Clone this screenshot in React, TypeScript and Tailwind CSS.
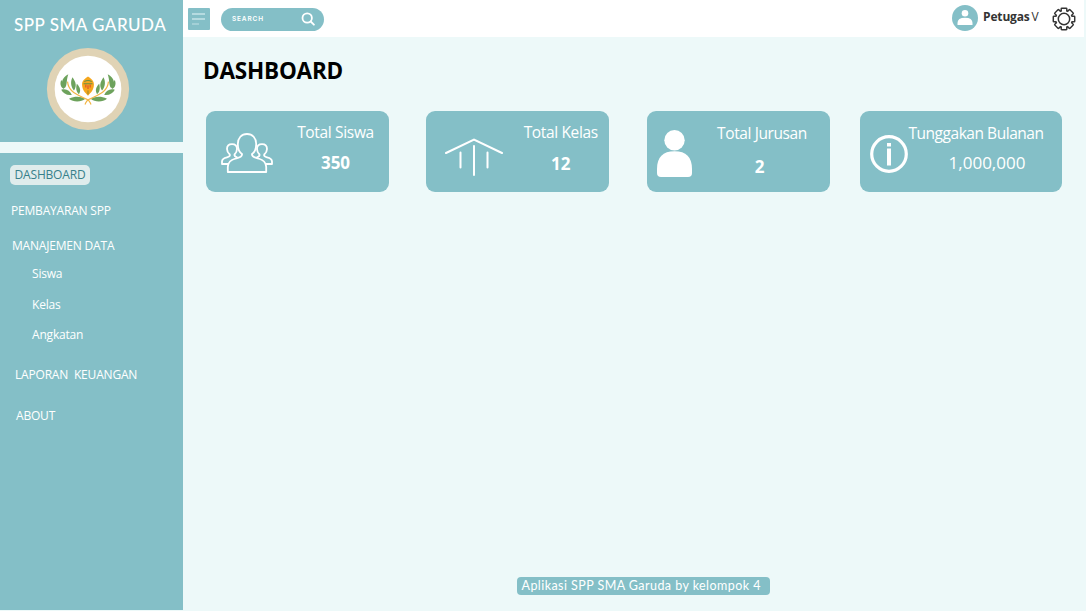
import type { ReactNode } from "react";

function Emblem() {
  const leaves = [
    "M23 55C17 49 18 41 28 36C25 44 27 50 23 55Z",
    "M36 58C31 52 31 45 34 40C39 47 40 52 36 58Z",
    "M43 63C38 59 39 53 40 49C45 54 46 58 43 63Z",
    "M33 64C26 65 21 62 18 57C25 55 30 58 33 64Z",
    "M52 69C46 74 35 74 29 69C38 65 45 66 52 69Z",
    "M22 56C17 54 16 49 18 44C22 48 23 52 22 56Z",
  ];
  const branch = (
    <g transform="translate(2.500 0) scale(0.960 1)">
      {leaves.map((d) => (
        <path key={d} d={d} fill="#6da25c" />
      ))}
      <path d="M27 46C28 60 42 64 52 69Q58 71 60 77" fill="none" stroke="#f2b544" strokeWidth="1.6" />
    </g>
  );
  return (
    <svg viewBox="-0.700 -0.700 113.400 113.400" className="h-[84px] w-[84px]">
      <circle cx="56" cy="56" r="55.5" fill="#e0d3b5" />
      <circle cx="56" cy="56" r="45" fill="#fff" />
      {branch}
      <g transform="translate(112 0) scale(-1 1)">{branch}</g>
      <path d="M56 39C60 42 64 44 64 50C64 57 60 61 56 65C52 61 48 57 48 50C48 44 52 42 56 39Z" fill="#f5a61d" />
      <path d="M51 46Q56 43 61 46M50 49H62" stroke="#6a8f43" strokeWidth="1.4" fill="none" />
      <path d="M53 50V54M56 51V56M59 50V54" stroke="#e5622b" strokeWidth="2" />
      <path d="M56 58V63" stroke="#8a8a35" strokeWidth="1.3" />
    </svg>
  );
}

function PeopleIcon() {
  const side = "M7 31H1V28.500Q1 25.500 6 24.300Q9.500 23.500 8.800 21.500Q6 19 6 16C6 12.800 8.200 11.200 11 11.200C13.800 11.200 16 12.800 16 16Q16 19 13.500 21.500Q13 23.500 16.500 24.500";
  return (
    <svg viewBox="0 0 52 40" className="h-[40px] w-[52px]" fill="none" stroke="#fff" strokeWidth="1.8" strokeLinejoin="round">
      <path d="M6.800 39V34Q7 27.500 14.500 25.500Q21.500 24 21 21C18 19 16.800 15 16.800 11C16.800 5 20.500 1 26 1C31.500 1 35.200 5 35.200 11C35.200 15 34 19 31 21Q30.500 24 37.500 25.500Q45 27.500 45.200 34V39Z" />
      <path d={side} />
      <path d={side} transform="translate(52 0) scale(-1 1)" />
    </svg>
  );
}

function HallIcon() {
  return (
    <svg viewBox="0 0 58 38" className="h-[38px] w-[58px]" fill="none" stroke="#fff" strokeWidth="2" strokeLinecap="round">
      <path d="M1 15L29 1.500L57 15" />
      <path d="M15.500 14.500V29.500M29 8V37M42.500 14.500V29.500" />
    </svg>
  );
}

function PersonIcon() {
  return (
    <svg viewBox="0 0 35 47" className="h-[47px] w-[35px]" fill="#fff">
      <circle cx="17.500" cy="10.200" r="10.200" />
      <path d="M0 39Q0 21.300 17.500 21.300Q35 21.300 35 39V43Q35 47 31 47H4Q0 47 0 43Z" />
    </svg>
  );
}

function InfoIcon() {
  return (
    <svg viewBox="0 0 38 38" className="h-[38px] w-[38px]">
      <circle cx="19" cy="19" r="17.300" fill="none" stroke="#fff" strokeWidth="3.200" />
      <path d="M17 8H21V11.500H17ZM17 13.500H21V30.500H17Z" fill="#fff" />
    </svg>
  );
}

function GearIcon() {
  const teeth = [0, 45, 90, 135, 180, 225, 270, 315];
  return (
    <svg viewBox="-12 -12 24 24" className="h-[24px] w-[24px]">
      {teeth.map((a) => (
        <rect key={a} x="-2.800" y="-10.700" width="5.600" height="5" rx="0.600" transform={`rotate(${a})`} fill="#fff" stroke="#333" strokeWidth="1.500" />
      ))}
      <circle r="8.500" fill="none" stroke="#333" strokeWidth="1.500" />
      <circle r="7.800" fill="#fff" />
      {teeth.map((a) => (
        <rect key={a} x="-2.050" y="-9.800" width="4.100" height="4" transform={`rotate(${a})`} fill="#fff" />
      ))}
      <circle r="5.700" fill="none" stroke="#333" strokeWidth="1.500" />
    </svg>
  );
}

function Card({ className, children }: { className: string; children: ReactNode }) {
  return <section className={`flex h-[81px] shrink-0 items-start rounded-[9px] bg-[#84bfc7] text-white ${className}`}>{children}</section>;
}

const label = "block h-5 whitespace-nowrap text-[15.5px] leading-5";
const value = "block h-5 whitespace-nowrap text-[17px] leading-5";
const item = "flex h-5 items-center whitespace-pre text-[12px] leading-5 tracking-[-0.19px]";

export default function App() {
  return (
    <div className="flex h-[611px] w-full overflow-hidden bg-[#edf9f9] font-['Open_Sans',sans-serif]">
      <aside className="flex h-[610px] w-[183px] shrink-0 flex-col text-white">
        <div className="flex h-[142px] flex-col items-start bg-[#84bfc7]">
          <h1 className="mt-[14px] ml-[14px] h-[22px] whitespace-nowrap font-['Lato',sans-serif] text-[17px] font-medium leading-[22px] tracking-[0.5px]">SPP SMA GARUDA</h1>
          <div className="mt-[11px] ml-[46px]">
            <Emblem />
          </div>
        </div>
        <nav className="mt-[10.500px] flex flex-1 flex-col items-start bg-[#84bfc7] pt-[12.500px]">
          <a className={`${item} ml-[10px] w-[80px] justify-center rounded-[5px] bg-[#dfecec] text-[#37808a]`}>DASHBOARD</a>
          <a className={`${item} mt-[16px] ml-[11px]`}>PEMBAYARAN SPP</a>
          <a className={`${item} mt-[15px] ml-[12px]`}>MANAJEMEN DATA</a>
          <a className={`${item} mt-[8px] ml-[32px]`}>Siswa</a>
          <a className={`${item} mt-[11px] ml-[32px]`}>Kelas</a>
          <a className={`${item} mt-[10px] ml-[32px]`}>Angkatan</a>
          <a className={`${item} mt-[20px] ml-[15px]`}>{"LAPORAN  KEUANGAN"}</a>
          <a className={`${item} mt-[21px] ml-[16px]`}>ABOUT</a>
        </nav>
      </aside>

      <div className="flex flex-1 flex-col">
        <header className="mr-[2px] flex h-[37px] items-start bg-white">
          <button className="mt-2 ml-[5px] flex h-[22px] w-[22px] flex-col items-start gap-[3px] rounded-[1px] bg-[#84bfc7] pt-[5px] pl-[4px]">
            <span className="h-[2px] w-[13px] bg-[#b5dbe0]" />
            <span className="h-[2px] w-[13px] bg-[#b5dbe0]" />
            <span className="h-[2px] w-[7px] bg-[#a3d0d6]" />
          </button>
          <div className="mt-2 ml-[11px] flex h-[23px] w-[103px] items-center justify-between rounded-full bg-[#84bfc7] pr-[9px] pl-[11px] text-white">
            <span className="mb-[2px] font-['Inter',sans-serif] text-[6.5px] font-semibold leading-3 tracking-[0.85px]">SEARCH</span>
            <svg viewBox="0 0 14 14" className="mb-[1px] h-[14px] w-[14px]" fill="none" stroke="#fff" strokeWidth="1.800" strokeLinecap="round">
              <circle cx="6.200" cy="6" r="4.700" />
              <path d="M9.700 9.500L12.900 12.700" />
            </svg>
          </div>
          <div className="ml-auto flex items-start text-[#333]">
            <svg viewBox="0 0 26 26" className="mt-[5px] h-[26px] w-[26px]">
              <circle cx="13" cy="13" r="13" fill="#84bfc7" />
              <circle cx="13" cy="8.300" r="3.300" fill="#fff" />
              <path d="M5.500 20V18Q5.500 12.800 13 12.800Q20.500 12.800 20.500 18V20Z" fill="#fff" />
            </svg>
            <span className="mt-[7px] ml-[5px] w-[48.500px] whitespace-nowrap text-[12px] font-bold leading-5 tracking-[-0.15px]">Petugas</span>
            <span className="mt-[7px] w-[20.500px] text-[12px] leading-5">V</span>
            <div className="mt-[7px] mr-[8px]">
              <GearIcon />
            </div>
          </div>
        </header>

        <main className="flex flex-1 flex-col">
          <h2 className="mt-[19px] ml-[20px] h-[30px] text-[22.500px] font-bold leading-[30px] tracking-[-0.2px] text-black">DASHBOARD</h2>
          <div className="mt-[25px] ml-[22.500px] flex">
            <Card className="w-[183px]">
              <div className="mt-[22px] ml-[15.500px]"><PeopleIcon /></div>
              <div className="mt-[11px] ml-[14px] w-[97px] text-center">
                <span className={`${label} tracking-[-0.33px]`}>Total Siswa</span>
                <span className={`${value} mt-[11px] font-bold`}>350</span>
              </div>
            </Card>
            <Card className="ml-[37.500px] w-[183px]">
              <div className="mt-[27px] ml-[18.500px]"><HallIcon /></div>
              <div className="mt-[11px] ml-[10px] w-[97px] text-center">
                <span className={`${label} tracking-[-0.35px]`}>Total Kelas</span>
                <span className={`${value} mt-[12px] font-bold`}>12</span>
              </div>
            </Card>
            <Card className="ml-[38px] w-[183px]">
              <div className="mt-[19px] ml-[10px]"><PersonIcon /></div>
              <div className="mt-[12px] ml-[15px] w-[110px] text-center">
                <span className={`${label} tracking-[-0.4px]`}>Total Jurusan</span>
                <span className={`${value} mt-[14px] pr-[5px] font-bold`}>2</span>
              </div>
            </Card>
            <Card className="ml-[30px] w-[202px]">
              <div className="mt-[24px] ml-[10px]"><InfoIcon /></div>
              <div className="mt-[12px] w-[136px] text-center">
                <span className={`${label} tracking-[-0.46px]`}>Tunggakan Bulanan</span>
                <span className={`${value} mt-[10px] pl-[22px]`}>1,000,000</span>
              </div>
            </Card>
          </div>
          <footer className="mt-auto mb-[16px] ml-[333.500px] flex h-[18px] w-[253px] items-center rounded-[4px] bg-[#84bfc7] pl-[5px] font-['Lato',sans-serif] text-[12.500px] leading-[18px] tracking-[0.44px] whitespace-nowrap text-white">
            Aplikasi SPP SMA Garuda by kelompok 4
          </footer>
        </main>
      </div>
    </div>
  );
}
